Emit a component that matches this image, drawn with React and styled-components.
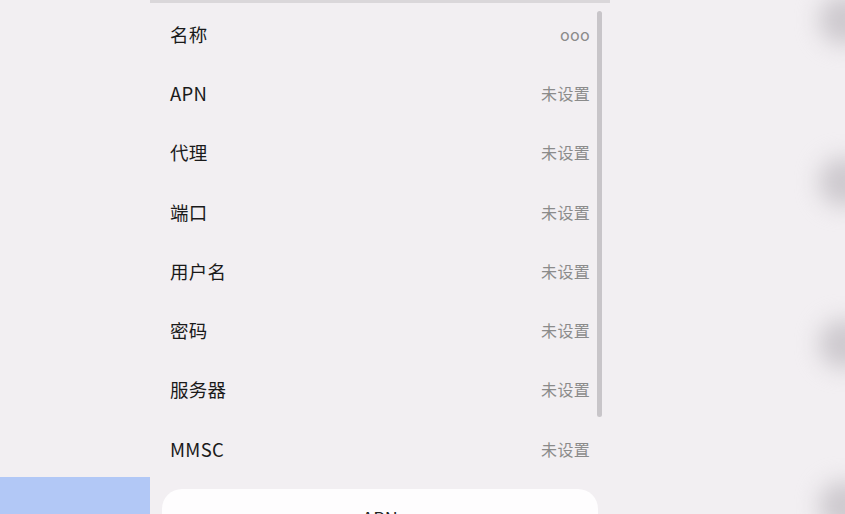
import React from "react";
import styled, { createGlobalStyle } from "styled-components";

const GlobalStyle = createGlobalStyle`
    html, body {
        margin: 0;
        padding: 0;
        background: #f2eff2;
        font-family: "Noto Sans CJK SC", "Noto Sans", sans-serif;
        overflow: hidden;
    }
`;

const rows = [
    { label: "名称", value: "ooo" },
    { label: "APN", value: "未设置" },
    { label: "代理", value: "未设置" },
    { label: "端口", value: "未设置" },
    { label: "用户名", value: "未设置" },
    { label: "密码", value: "未设置" },
    { label: "服务器", value: "未设置" },
    { label: "MMSC", value: "未设置" },
];

const App = () => {
    return (
        <>
            <GlobalStyle />
            <Screen>
                <LeftRail>
                    <SelectedTab />
                </LeftRail>
                <Panel>
                    <TopEdge />
                    <List>
                        {rows.map((row) => (
                            <Row key={row.label}>
                                <Label>{row.label}</Label>
                                <Value>{row.value}</Value>
                            </Row>
                        ))}
                        <Scrollbar />
                    </List>
                    <Sheet>
                        <SheetTitle>APN</SheetTitle>
                    </Sheet>
                </Panel>
                <RightRail>
                    <Blob />
                    <Blob />
                    <Blob />
                    <Blob />
                </RightRail>
            </Screen>
        </>
    );
};

const Screen = styled.div`
    display: grid;
    grid-template-columns: 150px 460px 1fr;
    width: 845px;
    height: 514px;
    overflow: hidden;
`;

const LeftRail = styled.div`
    display: flex;
    flex-direction: column;
    justify-content: flex-end;
`;

const SelectedTab = styled.div`
    height: 37px;
    background: #b2c8f6;
`;

const Panel = styled.div`
    display: flex;
    flex-direction: column;
    min-height: 0;
    overflow: hidden;
`;

const TopEdge = styled.div`
    flex: none;
    height: 3px;
    background: #dad7da;
`;

const List = styled.div`
    flex: none;
    position: relative;
    padding: 1px 20px 0 20px;
    display: flex;
    flex-direction: column;
`;

const Row = styled.div`
    height: 59.3px;
    display: flex;
    align-items: center;
    justify-content: space-between;
`;

const Label = styled.span`
    font-size: 18.5px;
    color: #1a1a1a;
    letter-spacing: 0.3px;
`;

const Value = styled.span`
    font-size: 16px;
    color: #8b8b8b;
    letter-spacing: 0.3px;
`;

const Scrollbar = styled.div`
    position: absolute;
    right: 8px;
    top: 8px;
    width: 5px;
    height: 406px;
    border-radius: 3px;
    background: #c8c5c9;
`;

const Sheet = styled.div`
    flex: 1;
    min-height: 0;
    overflow: hidden;
    margin: 11px 12px 0 12px;
    background: #fefdfe;
    border-radius: 20px 20px 0 0;
    display: flex;
    justify-content: center;
    align-items: flex-start;
`;

const SheetTitle = styled.span`
    margin-top: 16px;
    font-size: 18px;
    color: #222;
`;

const RightRail = styled.div`
    display: flex;
    flex-direction: column;
    align-items: flex-end;
    gap: 112px;
    margin-top: -5px;
    overflow: hidden;
`;

const Blob = styled.div`
    flex: none;
    width: 50px;
    height: 50px;
    margin-right: -24px;
    border-radius: 50%;
    background: #cdc9ce;
    filter: blur(11px);
`;

export default App;
